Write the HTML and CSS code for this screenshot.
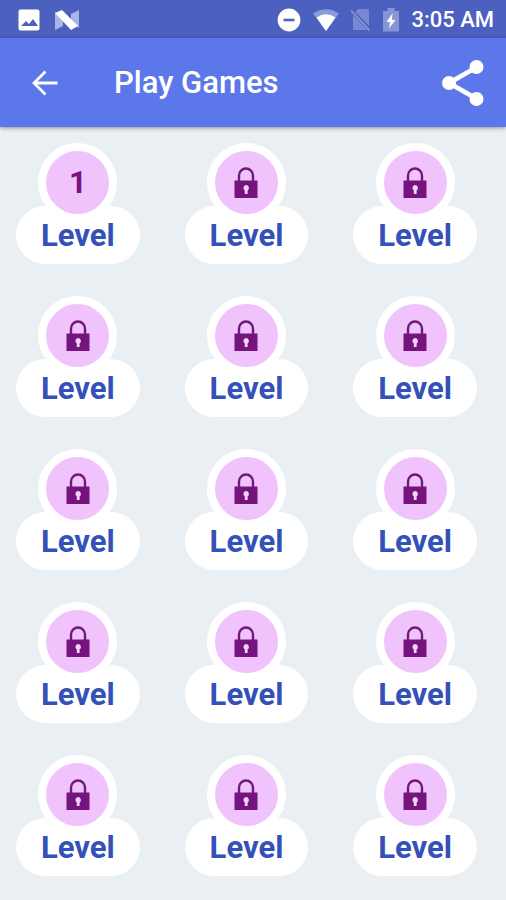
FILE: index.html
```html
<!DOCTYPE html>
<html lang="en">
<head>
  <meta charset="UTF-8">
  <meta name="viewport" content="width=device-width, initial-scale=1.0">
  <title>Play Games</title>
  <link rel="stylesheet" href="styles.css">
</head>
<body>
  <!-- Shared lock icon -->
  <svg class="sprite" width="0" height="0" aria-hidden="true">
    <symbol id="lock" viewBox="0 0 24 32">
      <path d="M5 14V8.500a7 7 0 0 1 14 0V14" fill="none" stroke="#6f1a7a" stroke-width="2.400"/>
      <path d="M0.500 13.500h23V31H0.500z" fill="#74147c"/>
      <path d="M12 18a3 3 0 0 1 1.600 5.500V27h-2.800v-3.500A3 3 0 0 1 12 18z" fill="#f3d3fb"/>
    </symbol>
  </svg>

  <!-- Status Bar -->
  <div class="status-bar">
    <div class="status-group status-left">
      <svg width="22" height="22" viewBox="0 0 22 22">
        <rect x="0.500" y="0.500" width="21" height="21" rx="2" fill="#fff"/>
        <path d="M3 17l5-5 3 3 4-5 5 7z" fill="#4b60bf"/>
      </svg>
      <svg width="24" height="20" viewBox="0 0 24 20">
        <path d="M0 2l8 6v8l-8 4zM16 4l8-4v18l-8-5z" fill="#a9b5e4"/>
        <path d="M0 3l7-3 16 16-7 4z" fill="#fff"/>
      </svg>
    </div>
    <div class="status-group status-right">
      <svg width="24" height="24" viewBox="0 0 24 24">
        <circle cx="12" cy="12" r="11.400" fill="#fff"/>
        <path d="M6.500 12h11" stroke="#4b60bf" stroke-width="2.600"/>
      </svg>
      <svg width="26" height="22" viewBox="0 0 26 22">
        <path d="M0 4.500Q13-4 26 4.500L13 22z" fill="#8c9ad8"/>
        <path d="M3.500 8.500Q13 2 22.500 8.500L13 22z" fill="#fff"/>
      </svg>
      <svg width="20" height="22" viewBox="0 0 20 22">
        <path d="M7 0h11v17L4.500 3zM2 6l14 15H2z" fill="#7888d1"/>
        <path d="M0 1.500l18.500 20" stroke="#8290d4" stroke-width="2"/>
      </svg>
      <svg width="16" height="24" viewBox="0 0 16 24">
        <path d="M0 3h4.500V0h7v3H16v20.500H0z" fill="#8795d6"/>
        <path d="M9.500 5.500L3.500 14h3.700L6 20.500 12.500 12H9z" fill="#fff"/>
      </svg>
      <span class="time">3:05 AM</span>
    </div>
  </div>

  <!-- App Bar -->
  <header class="app-bar">
    <button class="icon-button" aria-label="Back">
      <svg width="26" height="26" viewBox="0 0 26 26">
        <path d="M25.500 13H2M13.500 1.500L2 13l11.500 11.500" fill="none" stroke="#fff" stroke-width="2.800"/>
      </svg>
    </button>
    <h1>Play Games</h1>
    <button class="icon-button" aria-label="Share">
      <svg width="42" height="46" viewBox="0 0 42 46">
        <path d="M35 7L7 23l28 16" fill="none" stroke="#fff" stroke-width="4.800"/>
        <circle cx="34.500" cy="7" r="7" fill="#fff"/>
        <circle cx="7" cy="23" r="7" fill="#fff"/>
        <circle cx="34.500" cy="39" r="7" fill="#fff"/>
      </svg>
    </button>
  </header>

  <!-- Levels -->
  <main class="levels" id="levels"></main>

  <script>
    const levels = document.getElementById("levels");
    const unlocked = 1;

    for (let i = 1; i <= 15; i++) {
      const open = i <= unlocked;
      const badge = open ? i : '<svg width="24" height="32" aria-hidden="true"><use href="#lock"></use></svg>';

      levels.innerHTML += `
        <button class="level"${open ? "" : " disabled"}>
          <span class="badge">${badge}</span>
          <span class="label">Level</span>
        </button>`;
    }
  </script>
</body>
</html>
```

FILE: styles.css
```css
/* General Styles */
* {
  box-sizing: border-box;
}

body {
  margin: 0;
  font-family: Roboto, sans-serif;
  font-weight: 500;
  background-color: #e9eff2;
}

button {
  padding: 0;
  border: none;
  background: none;
  font: inherit;
  color: inherit;
  cursor: pointer;
}

svg {
  display: block;
}

.sprite {
  position: absolute;
}

/* Status Bar */
.status-bar {
  display: flex;
  justify-content: space-between;
  height: 38px;
  padding: 2px 12px 0 18px;
  background-color: #4b60bf;
  color: #fff;
}

.status-group {
  display: flex;
  align-items: center;
}

.status-left {
  gap: 15px;
}

.status-right {
  gap: 12px;
}

.time {
  font-size: 22px;
  line-height: 28px;
}

/* App Bar */
.app-bar {
  display: flex;
  align-items: center;
  height: 89px;
  padding: 0 22px 0 32px;
  background-color: #5b77e9;
  color: #fff;
  box-shadow: 0 1px 4px rgba(0, 0, 0, 0.4);
}

.app-bar h1 {
  flex: 1;
  margin: 0 0 0 56px;
  font-size: 31px;
  font-weight: 500;
  line-height: 40px;
}

/* Level Grid */
.levels {
  display: grid;
  grid-template-columns: repeat(3, 1fr);
  row-gap: 32px;
  padding: 16px 0 24px;
}

.level {
  display: flex;
  flex-direction: column;
  align-items: center;
  margin: 0 29px 0 16px;
}

.level:disabled {
  cursor: default;
}

.badge {
  display: flex;
  justify-content: center;
  align-items: center;
  width: 79px;
  height: 79px;
  border: 8px solid #fff;
  border-radius: 50%;
  background-color: #f1c3fd;
  color: #74147c;
  font-size: 31px;
  font-weight: 700;
  z-index: 1;
}

.label {
  width: 100%;
  height: 58px;
  margin-top: -16px;
  border-radius: 29px;
  background-color: #fff;
  color: #3450b9;
  font-size: 31px;
  font-weight: 700;
  line-height: 60px;
}
```
